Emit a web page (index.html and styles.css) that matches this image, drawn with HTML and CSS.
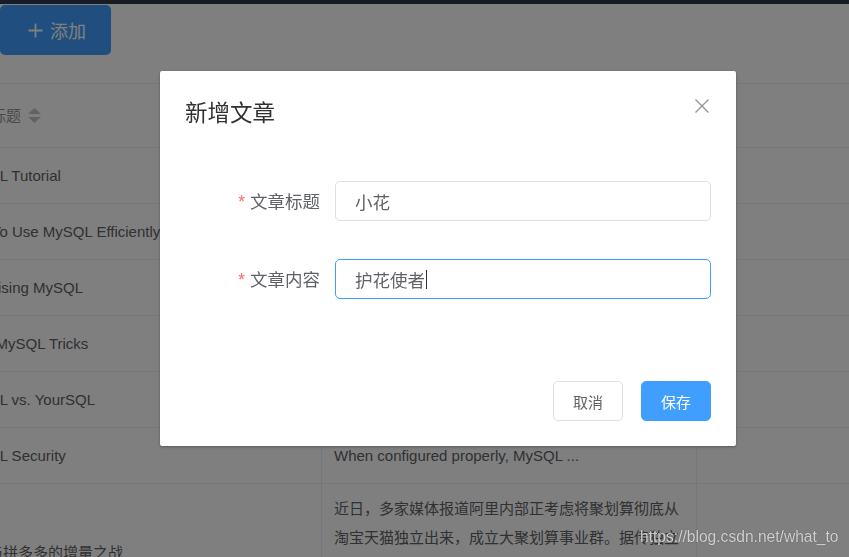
FILE: index.html
```html
<!DOCTYPE html>
<html lang="zh-CN">
<head>
<meta charset="utf-8">
<title>文章管理</title>
<link rel="stylesheet" href="styles.css">
</head>
<body>
<div class="topbar"></div>
<main class="page">
  <div class="toolbar">
    <button class="btn-add" type="button">
      <svg class="plus" width="15" height="15" viewBox="0 0 15 15"><path d="M7.5 0.5V14.5M0.5 7.5H14.5" stroke="#fff" stroke-width="1.8" fill="none"/></svg>
      <span>添加</span>
    </button>
  </div>
  <table class="table">
    <colgroup>
      <col class="c1"><col class="c2"><col class="c3">
    </colgroup>
    <thead>
      <tr>
        <th class="b">文章标题<svg class="caret" width="13" height="15" viewBox="0 0 13 15"><polygon points="0,6 6.5,0 13,6" fill="#C0C4CC"/><polygon points="0,9 13,9 6.5,15" fill="#C0C4CC"/></svg></th>
        <th class="b">文章内容</th>
        <th></th>
      </tr>
    </thead>
    <tbody>
      <tr><td class="b">MySQL Tutorial</td><td class="b">DBMS stands for DataBase ...</td><td></td></tr>
      <tr><td class="b">How To Use MySQL Efficiently</td><td class="b">After you went through a ...</td><td></td></tr>
      <tr><td class="b">Optimising MySQL</td><td class="b">In this tutorial we will show ...</td><td></td></tr>
      <tr><td class="b">1001 MySQL Tricks</td><td class="b">1. Never run mysqld as root. 2. ...</td><td></td></tr>
      <tr><td class="b">MySQL vs. YourSQL</td><td class="b">In the following database comparison ...</td><td></td></tr>
      <tr><td class="b">MySQL Security</td><td class="b">When configured properly, MySQL ...</td><td></td></tr>
      <tr class="tall"><td class="b">聚划与拼多多的增量之战</td><td class="b">近日，多家媒体报道阿里内部正考虑将聚划算彻底从淘宝天猫独立出来，成立大聚划算事业群。据传独立后的聚划算将由阿里巴巴直接管理，全面对标拼多多。</td><td></td></tr>
    </tbody>
  </table>
</main>
<div class="overlay"></div>
<div class="dialog">
  <div class="dialog-header">
    <span class="dialog-title">新增文章</span>
    <svg class="close" width="16" height="16" viewBox="0 0 16 16"><path d="M1.5 1.5L14.5 14.5M14.5 1.5L1.5 14.5" stroke="#909399" stroke-width="1.3" fill="none"/></svg>
  </div>
  <div class="dialog-body">
    <div class="form-item">
      <label class="form-label"><span class="req">*</span>文章标题</label>
      <div class="input">小花</div>
    </div>
    <div class="form-item">
      <label class="form-label"><span class="req">*</span>文章内容</label>
      <div class="input focused">护花使者<span class="cursor"></span></div>
    </div>
  </div>
  <div class="dialog-footer">
    <button class="btn" type="button">取消</button>
    <button class="btn primary" type="button">保存</button>
  </div>
</div>
<div class="watermark">https://blog.csdn.net/what_to</div>
</body>
</html>
```
FILE: styles.css
```css
* { box-sizing: border-box; }
html, body { margin: 0; }
body {
  width: 849px;
  height: 557px;
  overflow: hidden;
  background: #fff;
  font-family: "Liberation Sans", "Noto Sans CJK SC", sans-serif;
}
.topbar { height: 4px; background: #30394b; }
.page { padding-top: 1px; }
.toolbar { height: 78px; }
.btn-add {
  display: flex;
  align-items: center;
  gap: 7px;
  width: 111px;
  height: 50px;
  padding: 0 0 0 28px;
  background: #409EFF;
  color: #fff;
  border: none;
  border-radius: 5px;
  font-family: "Noto Sans CJK SC", sans-serif;
  font-size: 18px;
  line-height: 24px;
}
.table {
  margin-left: -54px;
  width: 951px;
  table-layout: fixed;
  border-collapse: separate;
  border-spacing: 0;
  border-top: 1px solid #EBEEF5;
  font-size: 15px;
  color: #606266;
}
.c1 { width: 376px; }
.c2 { width: 375px; }
.c3 { width: 200px; }
.table th, .table td {
  padding: 13px 12px;
  line-height: 29px;
  text-align: left;
  vertical-align: middle;
  border-bottom: 1px solid #EBEEF5;
  white-space: normal;
}
.table th {
  padding: 17px 12px 17px 15px;
  font-weight: 400;
  color: #909399;
}
.table .b { border-right: 1px solid #EBEEF5; }
.caret { margin-left: 7px; vertical-align: -2px; }
.table .tall td { padding: 10px 12px; }
.overlay {
  position: fixed;
  inset: 0;
  background: rgba(0, 0, 0, 0.5);
}
.dialog {
  position: absolute;
  left: 160px;
  top: 71px;
  width: 576px;
  background: #fff;
  border-radius: 2px;
  box-shadow: 0 1px 3px rgba(0, 0, 0, 0.3);
  font-family: "Noto Sans CJK SC", sans-serif;
}
.dialog-header {
  display: flex;
  justify-content: space-between;
  align-items: flex-start;
  padding: 25px 25px 12px;
}
.dialog-title {
  font-size: 22.5px;
  line-height: 30px;
  color: #303133;
}
.close { margin-top: 2px; margin-right: 1px; }
.dialog-body { padding: 43px 25px 32px; }
.form-item { display: flex; margin-bottom: 37px; }
.form-label {
  width: 150px;
  padding-right: 15px;
  text-align: right;
  font-size: 17.5px;
  line-height: 40px;
  color: #606266;
}
.req {
  font-family: "Liberation Sans", sans-serif;
  color: #F56C6C;
  margin-right: 5px;
}
.input {
  display: flex;
  align-items: center;
  width: 376px;
  height: 40px;
  padding: 0 19px;
  border: 1px solid #DCDFE6;
  border-radius: 5px;
  font-size: 17.5px;
  color: #606266;
}
.input.focused { border-color: #409EFF; }
.cursor {
  display: inline-block;
  width: 1px;
  height: 19px;
  margin-left: 1px;
  background: #303133;
}
.dialog-footer {
  display: flex;
  justify-content: flex-end;
  gap: 18px;
  padding: 12px 25px 25px;
}
.btn {
  width: 70px;
  height: 40px;
  padding: 0;
  border: 1px solid #DCDFE6;
  border-radius: 5px;
  background: #fff;
  color: #606266;
  font-family: "Noto Sans CJK SC", sans-serif;
  font-size: 15px;
}
.btn.primary {
  background: #409EFF;
  border-color: #409EFF;
  color: #fff;
}
.watermark {
  position: absolute;
  left: 640px;
  top: 527px;
  font-family: "Liberation Sans", sans-serif;
  font-size: 15.6px;
  line-height: 20px;
  color: rgba(235, 235, 235, 0.85);
  text-shadow: 0 0 1px rgba(0, 0, 0, 0.6);
}
```
